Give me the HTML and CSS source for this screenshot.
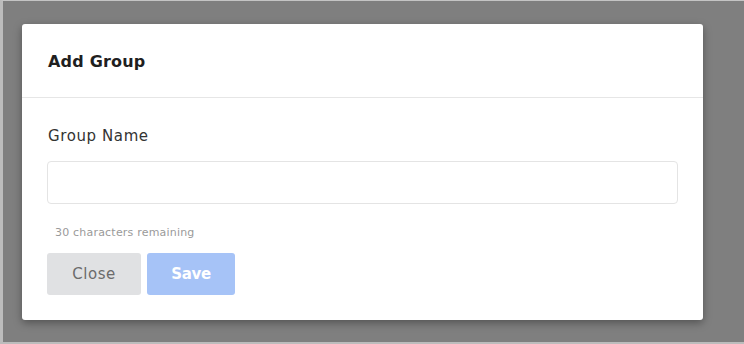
FILE: index.html
```html
<!DOCTYPE html>
<html>
<head>
<meta charset="utf-8">
<link rel="stylesheet" href="styles.css">
</head>
<body>
<div class="backdrop">
  <div class="modal">
    <div class="modal-header">
      <h2 class="modal-title">Add Group</h2>
    </div>
    <div class="modal-body">
      <label class="field-label" for="gname">Group Name</label>
      <input class="field-input" id="gname" type="text">
      <div class="field-help">30 characters remaining</div>
      <div class="actions">
        <button class="btn btn-close">Close</button>
        <button class="btn btn-save">Save</button>
      </div>
    </div>
  </div>
</div>
</body>
</html>
```
FILE: styles.css
```css
html, body {
  margin: 0;
  padding: 0;
  background: #7f7f7f;
}
.backdrop {
  width: 744px;
  height: 344px;
  box-sizing: border-box;
  border-top: 1px solid #c4c4c4;
  border-left: 3px solid #bcbcbc;
  border-bottom: 2px solid #bcbcbc;
  padding: 23px 0 0 19px;
  font-family: "DejaVu Sans", sans-serif;
}
.modal {
  width: 681px;
  height: 296px;
  background: #fff;
  border-radius: 3px;
  box-shadow: 0 3px 8px rgba(0, 0, 0, 0.35);
  display: flex;
  flex-direction: column;
}
.modal-header {
  height: 73px;
  border-bottom: 1px solid #e6e6e6;
  display: flex;
  align-items: center;
  padding-left: 26px;
  padding-top: 1px;
  box-sizing: border-box;
  height: 74px;
}
.modal-title {
  margin: 0;
  font-size: 16px;
  font-weight: 700;
  color: #1f1f1f;
  letter-spacing: 0.2px;
}
.modal-body {
  padding: 27px 25px 0 25px;
  display: flex;
  flex-direction: column;
}
.field-label {
  font-size: 15px;
  line-height: 22px;
  color: #333;
  padding-left: 1px;
  margin-bottom: 14px;
  letter-spacing: 0.6px;
}
.field-input {
  height: 43px;
  box-sizing: border-box;
  border: 1px solid #e4e4e4;
  border-radius: 4px;
  margin: 0;
  outline: none;
}
.field-help {
  font-size: 11px;
  line-height: 16px;
  color: #9a9a9a;
  padding-left: 8px;
  margin-top: 21px;
  letter-spacing: 0.2px;
}
.actions {
  display: flex;
  gap: 6px;
  margin-top: 12px;
}
.btn {
  height: 42px;
  border: none;
  border-radius: 3px;
  font-family: inherit;
  font-size: 15px;
  padding: 0;
}
.btn-close {
  width: 94px;
  background: #e0e1e3;
  color: #6b6b6b;
  letter-spacing: 0.5px;
}
.btn-save {
  width: 88px;
  background: #a6c3f7;
  color: #fff;
  font-weight: 700;
  letter-spacing: -0.3px;
}
```
